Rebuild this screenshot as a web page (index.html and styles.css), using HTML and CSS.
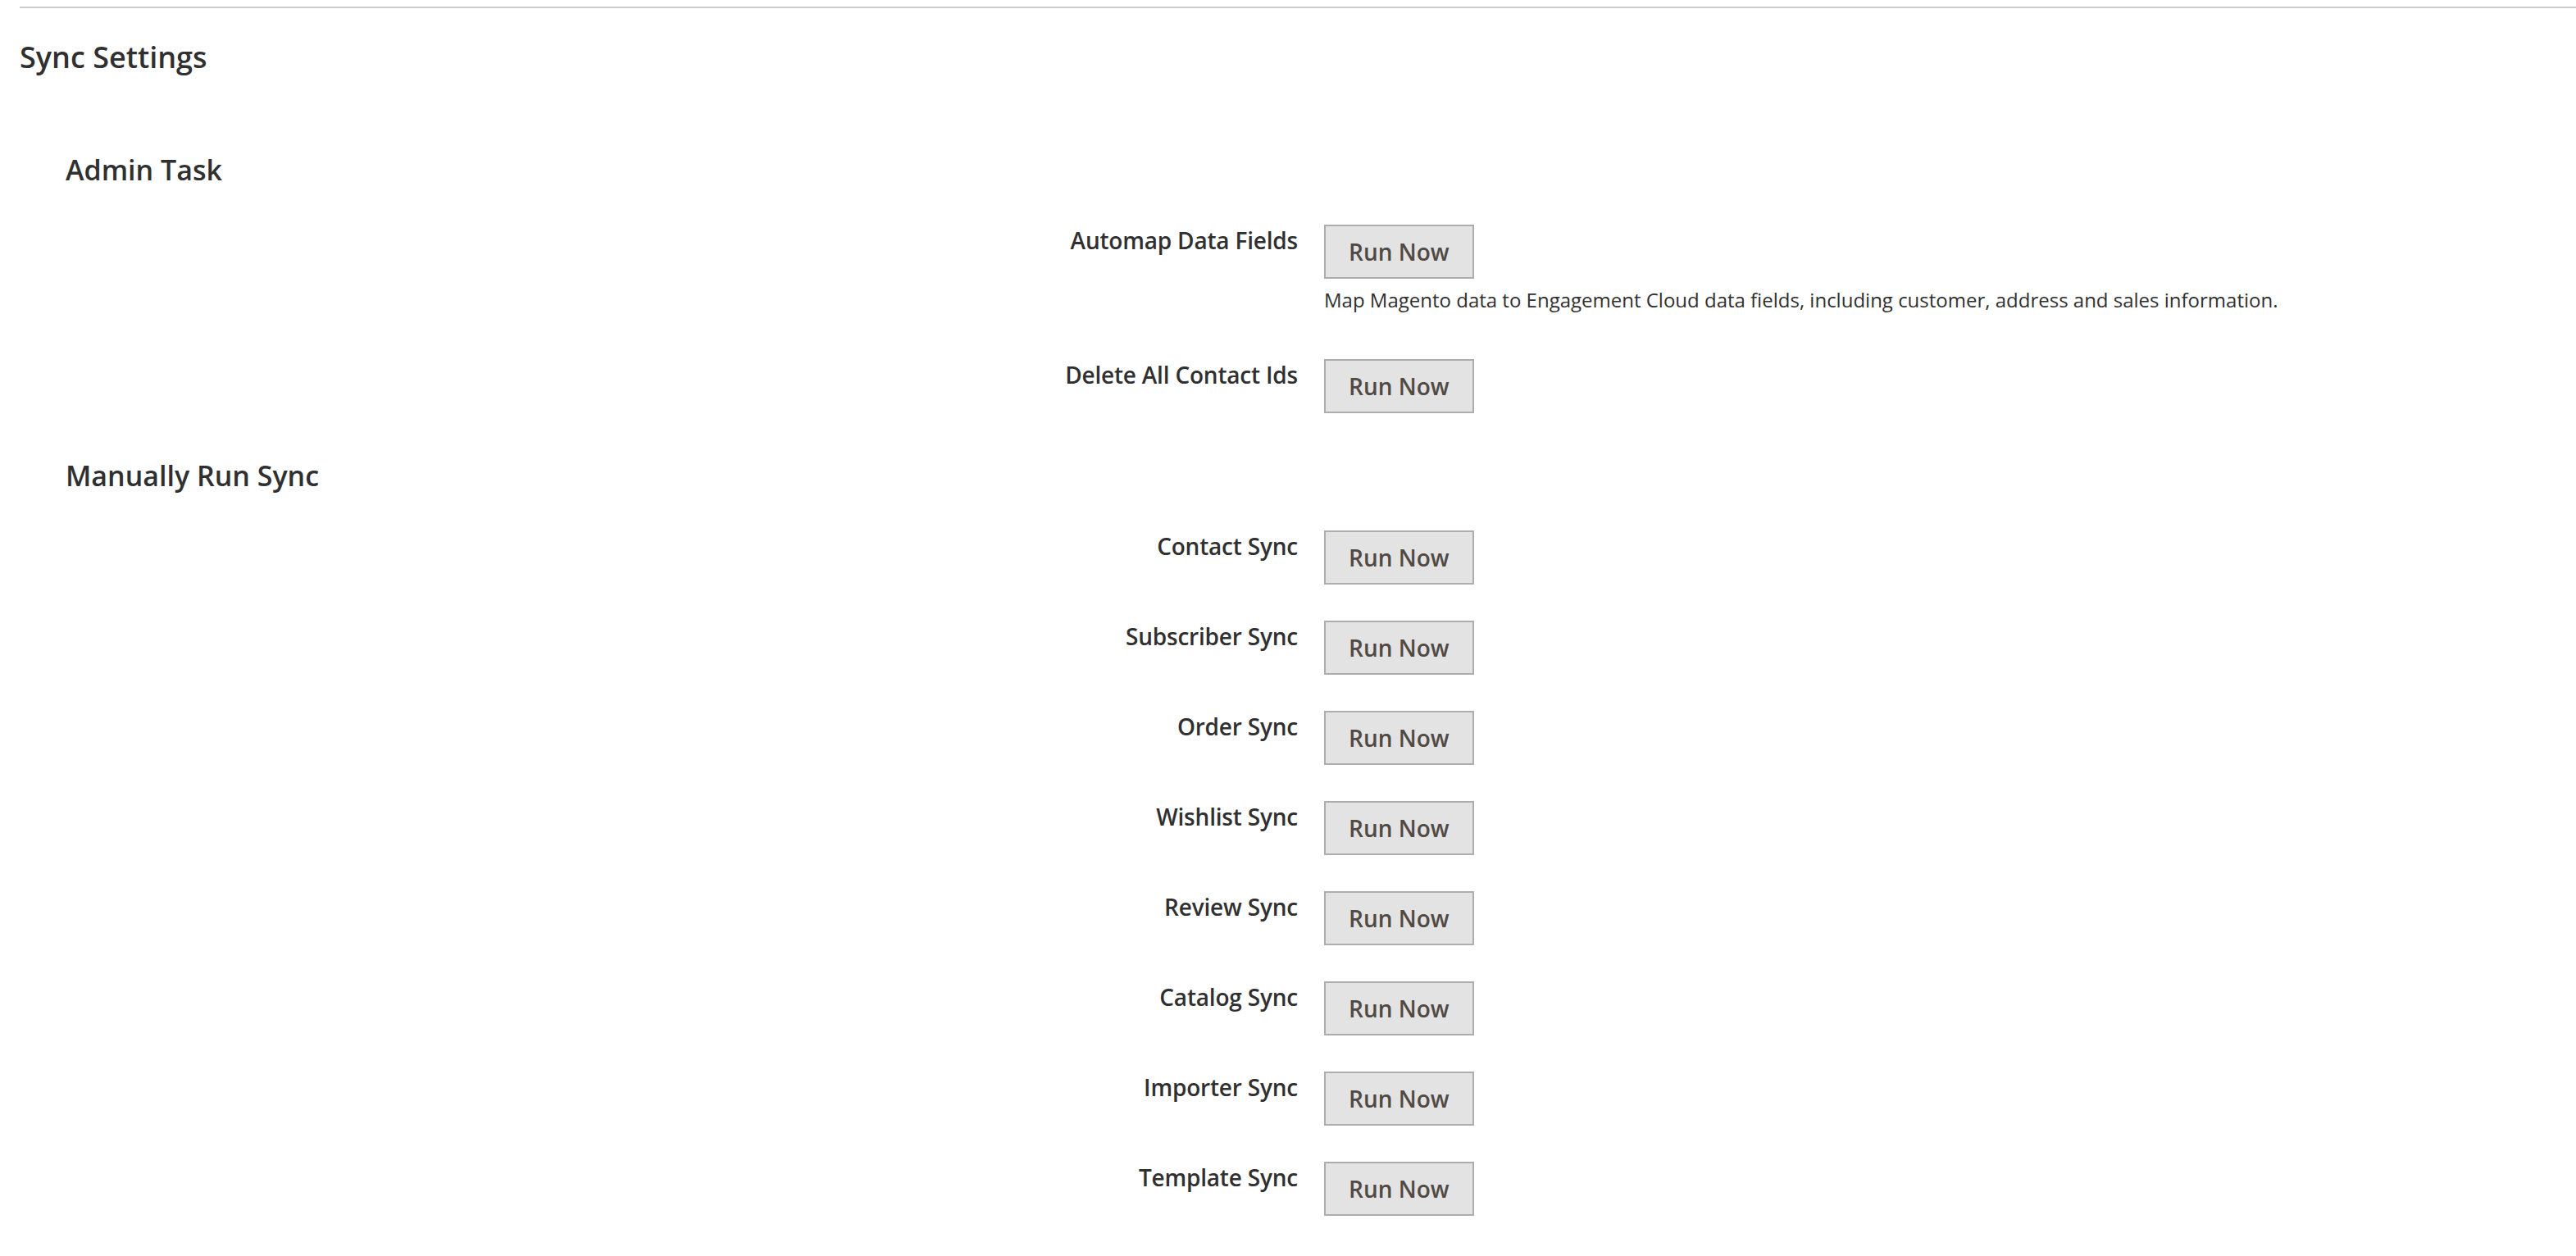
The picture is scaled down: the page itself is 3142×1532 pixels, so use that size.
FILE: index.html
```html
<!DOCTYPE html>
<html lang="en">
<head>
<meta charset="utf-8">
<title>Sync Settings</title>
<link rel="stylesheet" href="styles.css">
</head>
<body>
<div class="section">
  <h2 class="section-title">Sync Settings</h2>

  <h3 class="group-title">Admin Task</h3>
  <div class="field">
    <div class="label">Automap Data Fields</div>
    <div class="value">
      <button class="btn" type="button">Run Now</button>
      <p class="note">Map Magento data to Engagement Cloud data fields, including customer, address and sales information.</p>
    </div>
  </div>
  <div class="field">
    <div class="label">Delete All Contact Ids</div>
    <div class="value"><button class="btn" type="button">Run Now</button></div>
  </div>

  <h3 class="group-title group-title-next">Manually Run Sync</h3>
  <div class="field">
    <div class="label">Contact Sync</div>
    <div class="value"><button class="btn" type="button">Run Now</button></div>
  </div>
  <div class="field">
    <div class="label">Subscriber Sync</div>
    <div class="value"><button class="btn" type="button">Run Now</button></div>
  </div>
  <div class="field">
    <div class="label">Order Sync</div>
    <div class="value"><button class="btn" type="button">Run Now</button></div>
  </div>
  <div class="field">
    <div class="label">Wishlist Sync</div>
    <div class="value"><button class="btn" type="button">Run Now</button></div>
  </div>
  <div class="field">
    <div class="label">Review Sync</div>
    <div class="value"><button class="btn" type="button">Run Now</button></div>
  </div>
  <div class="field">
    <div class="label">Catalog Sync</div>
    <div class="value"><button class="btn" type="button">Run Now</button></div>
  </div>
  <div class="field">
    <div class="label">Importer Sync</div>
    <div class="value"><button class="btn" type="button">Run Now</button></div>
  </div>
  <div class="field">
    <div class="label">Template Sync</div>
    <div class="value"><button class="btn" type="button">Run Now</button></div>
  </div>
</div>
</body>
</html>
```

FILE: styles.css
```css
html, body {
  margin: 0;
  padding: 0;
  background: #ffffff;
}

body {
  font-family: "Open Sans", "Liberation Sans", sans-serif;
  color: #303030;
}

.section {
  margin: 8px 0 0 24px;
  border-top: 2px solid #cccccc;
}

.section-title {
  margin: 37px 0 0 0;
  font-size: 36px;
  line-height: 46px;
  font-weight: 600;
  color: #303030;
}

.group-title {
  margin: 91px 0 44px 0;
  padding-left: 56px;
  font-size: 34px;
  line-height: 46px;
  font-weight: 600;
  color: #303030;
}

.group-title-next {
  margin-top: 53px;
}

.field {
  display: grid;
  grid-template-columns: 50% 1fr;
  column-gap: 32px;
  align-items: start;
  margin-bottom: 44px;
}

.label {
  text-align: right;
  font-size: 28px;
  font-weight: 600;
  letter-spacing: -0.2px;
  color: #303030;
}

.value {
  display: flex;
  flex-direction: column;
  align-items: flex-start;
}

.btn {
  font-family: "Open Sans", "Liberation Sans", sans-serif;
  font-size: 28px;
  font-weight: 600;
  line-height: 38px;
  letter-spacing: 0;
  color: #514943;
  background: #e3e3e3;
  border: 2px solid #adadad;
  border-radius: 0;
  padding: 12px 28px;
  margin: 0;
  cursor: pointer;
}

.note {
  margin: 9px 0 11px 0;
  font-size: 24px;
  line-height: 34px;
  color: #303030;
}
```
